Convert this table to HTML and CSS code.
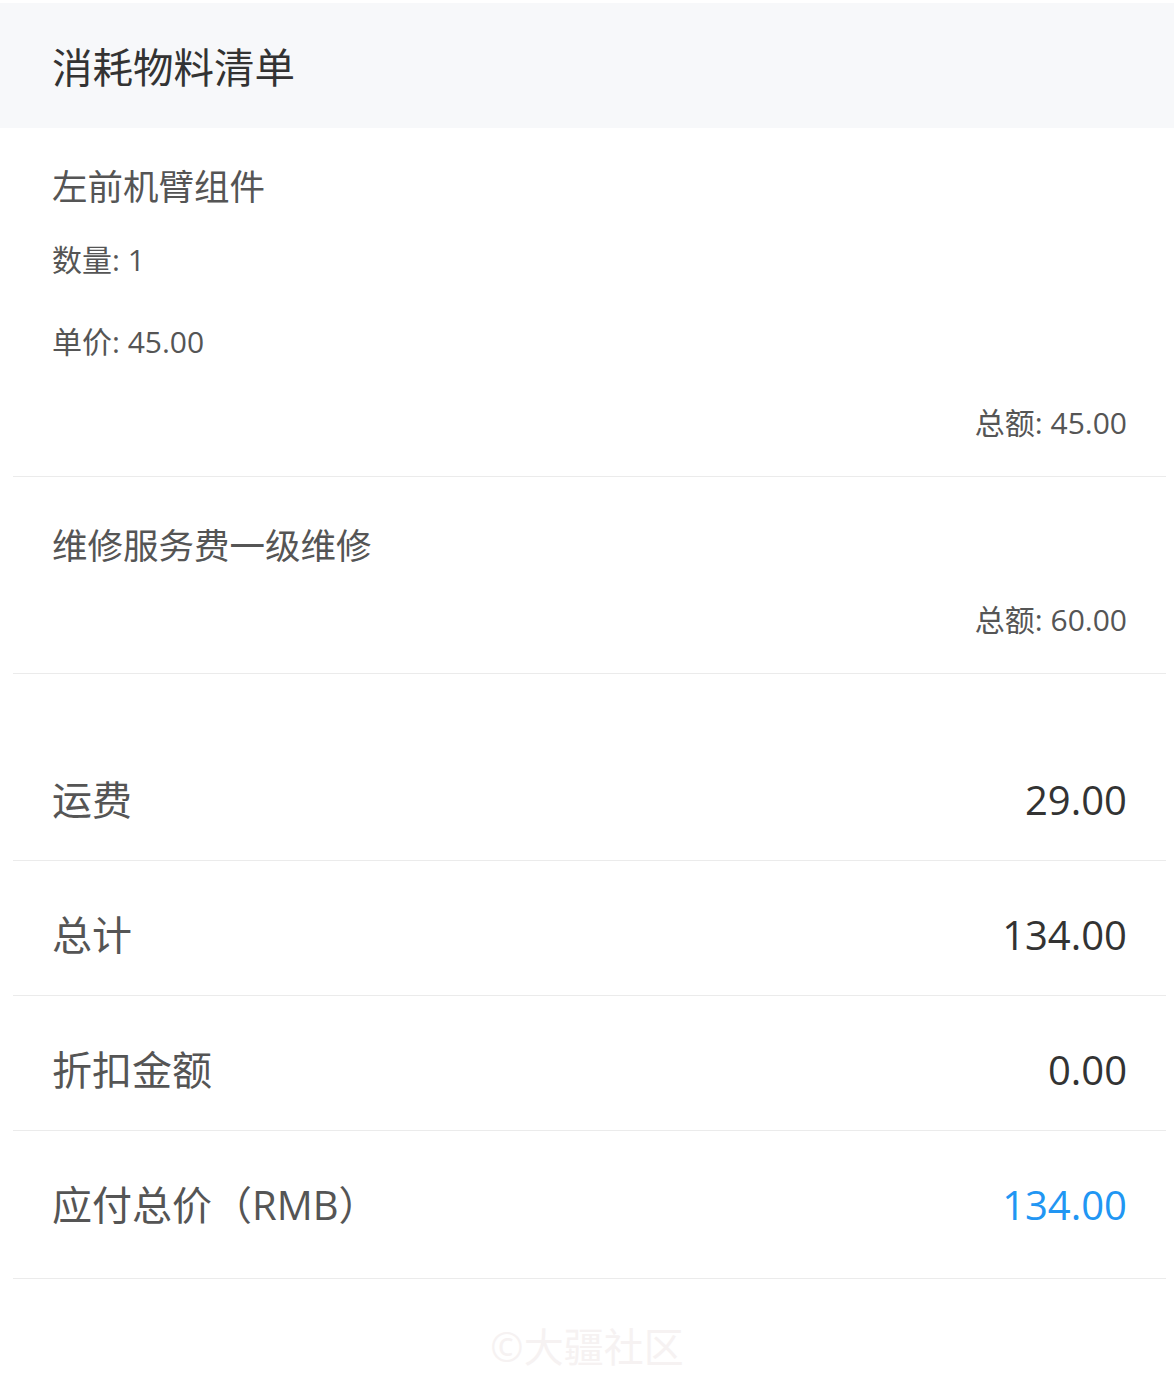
FILE: index.html
```html
<!DOCTYPE html>
<html lang="zh-CN">
<head>
<meta charset="utf-8">
<title>消耗物料清单</title>
<link rel="stylesheet" href="styles.css">
</head>
<body>
<div class="page">
  <div class="header">消耗物料清单</div>
  <div class="list">
    <div class="item item-first">
      <div class="item-title">左前机臂组件</div>
      <div class="item-line line-qty">数量: 1</div>
      <div class="item-line line-price">单价: 45.00</div>
      <div class="item-line item-total">总额: 45.00</div>
    </div>
    <div class="item item-second">
      <div class="item-title">维修服务费一级维修</div>
      <div class="item-line item-total line-tight">总额: 60.00</div>
    </div>
    <div class="row row-first">
      <span class="row-label">运费</span>
      <span class="row-value">29.00</span>
    </div>
    <div class="row">
      <span class="row-label">总计</span>
      <span class="row-value">134.00</span>
    </div>
    <div class="row">
      <span class="row-label">折扣金额</span>
      <span class="row-value">0.00</span>
    </div>
    <div class="row row-last">
      <span class="row-label">应付总价（RMB）</span>
      <span class="row-value row-value-accent">134.00</span>
    </div>
  </div>
  <div class="watermark">©大疆社区</div>
</div>
</body>
</html>
```
FILE: styles.css
```css
html, body {
  margin: 0;
  padding: 0;
  background: #ffffff;
}

body {
  font-family: "Open Sans", "Noto Sans CJK SC", sans-serif;
  color: #555555;
}

.page {
  padding-top: 3px;
}

.header {
  height: 125px;
  background: #f7f8fa;
  display: flex;
  align-items: center;
  padding-left: 52px;
  font-size: 40.5px;
  color: #333333;
}

.list {
  margin: 0 8px 0 13px;
}

.item {
  border-bottom: 1px solid #ebebeb;
  padding: 0 39px 33px;
}

.item-first {
  padding-top: 33px;
}

.item-second {
  padding-top: 43px;
}

.item-title {
  font-size: 35.5px;
  line-height: 50px;
  color: #555555;
}

.item-line {
  font-size: 30px;
  line-height: 40px;
  color: #555555;
}

.line-qty {
  margin-top: 29px;
}

.line-price {
  margin-top: 42px;
}

.item-total {
  margin-top: 41px;
  text-align: right;
}

.line-tight {
  margin-top: 30px;
}

.row {
  display: flex;
  justify-content: space-between;
  align-items: center;
  padding: 54px 39px 40px;
  line-height: 40px;
  border-bottom: 1px solid #ebebeb;
}

.row-first {
  margin-top: 52px;
}

.row-last {
  padding-bottom: 53px;
}

.row-label {
  font-size: 40px;
  color: #555555;
}

.row-value {
  font-size: 40px;
  color: #333333;
}

.row-value-accent {
  color: #2196f3;
}

.watermark {
  margin-top: 40px;
  text-align: center;
  font-size: 40px;
  line-height: 56px;
  color: #f6f2f2;
}
```
